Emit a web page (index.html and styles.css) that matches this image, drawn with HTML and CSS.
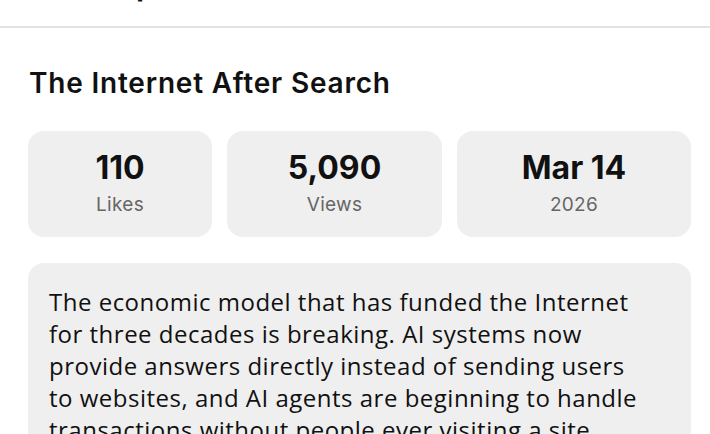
FILE: index.html
```html
<!DOCTYPE html>
<html lang="en">
<head>
<meta charset="utf-8">
<title>The Internet After Search</title>
<link rel="stylesheet" href="styles.css">
</head>
<body>
<header class="topbar">
  <div class="topbar-title">Group</div>
</header>
<main class="page">
  <h1 class="title">The Internet After Search</h1>
  <section class="stats">
    <div class="stat">
      <div class="stat-value">110</div>
      <div class="stat-label">Likes</div>
    </div>
    <div class="stat">
      <div class="stat-value">5,090</div>
      <div class="stat-label">Views</div>
    </div>
    <div class="stat">
      <div class="stat-value">Mar 14</div>
      <div class="stat-label">2026</div>
    </div>
  </section>
  <section class="summary">
    <p>The economic model that has funded the Internet for three decades is breaking. AI systems now provide answers directly instead of sending users to websites, and AI agents are beginning to handle transactions without people ever visiting a site.</p>
  </section>
</main>
</body>
</html>
```
FILE: styles.css
```css
* { box-sizing: border-box; }
html, body { margin: 0; padding: 0; background: #fff; overflow: hidden; }
body { font-family: "Open Sans", "Liberation Sans", sans-serif; color: #111; width: 710px; height: 434px; }

.topbar {
  height: 28px;
  border-bottom: 2px solid #e3e3e3;
  overflow: hidden;
}
.topbar-title {
  margin-top: -31px;
  padding-left: 70px;
  font-family: Inter, sans-serif;
  font-weight: 700;
  font-size: 28px;
  line-height: 34px;
  color: #111;
}

.page {
  padding: 0 19px 0 28px;
}
.title {
  margin: 38px 0 0 1px;
  font-family: Inter, "Open Sans", sans-serif;
  font-weight: 600;
  font-size: 28px;
  line-height: 34px;
  letter-spacing: 0.8px;
  color: #111;
}
.stats {
  margin-top: 31px;
  display: grid;
  grid-template-columns: 184px 215px 1fr;
  gap: 15px;
}
.stat {
  height: 106px;
  background: #efefef;
  border-radius: 16px;
  display: flex;
  flex-direction: column;
  align-items: center;
  padding-top: 17px;
}
.stat-value {
  font-family: Inter, sans-serif;
  font-weight: 700;
  font-size: 32px;
  line-height: 40px;
  color: #111;
}
.stat-label {
  margin-top: 5px;
  font-family: Inter, sans-serif;
  font-size: 19px;
  line-height: 24px;
  letter-spacing: 0.3px;
  color: #666;
}
.summary {
  margin-top: 26px;
  background: #efefef;
  border-radius: 16px;
  padding: 23px 42px 24px 21px;
}
.summary p {
  margin: 0;
  font-size: 24px;
  line-height: 32px;
  letter-spacing: 0.5px;
  color: #111;
}
```
